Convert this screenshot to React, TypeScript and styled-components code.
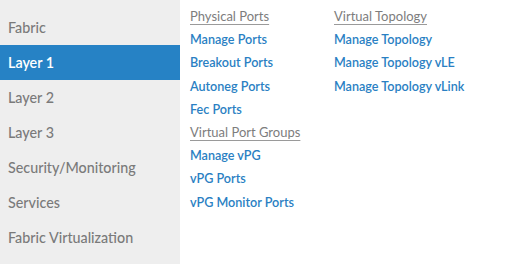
import React from 'react'
import styled, { createGlobalStyle } from 'styled-components'

const GlobalStyle = createGlobalStyle`
  html, body {
    margin: 0;
    padding: 0;
    background: #fff;
  }
  body {
    font-family: Lato, "Open Sans", sans-serif;
  }
`

const Layout = styled.div`
  display: flex;
  width: 509px;
  height: 264px;
  background: #fff;
`

const Sidebar = styled.nav`
  width: 180px;
  flex-shrink: 0;
  background: #eeeeee;
  padding-top: 10px;
  box-sizing: border-box;
`

const NavItem = styled.div<{ $active?: boolean }>`
  height: 35px;
  display: flex;
  align-items: center;
  padding-left: 8px;
  font-size: 14.3px;
  font-weight: ${({ $active }) => ($active ? 600 : 500)};
  color: ${({ $active }) => ($active ? '#fff' : '#7a7a7a')};
  background: ${({ $active }) => ($active ? '#2682c5' : 'transparent')};
`

const Menu = styled.div`
  display: flex;
  padding: 5px 0 0 10px;
`

const Column = styled.div<{ $width: number }>`
  width: ${({ $width }) => $width}px;
  display: flex;
  flex-direction: column;
`

const GroupTitle = styled.div`
  height: 23.2px;
  line-height: 23px;
  font-size: 13px;
  color: #7d7d7d;
  span {
    text-decoration: underline;
    text-decoration-color: #9a9a9a;
    text-underline-offset: 3px;
  }
`

const Link = styled.a`
  height: 23.2px;
  line-height: 23px;
  font-size: 12.6px;
  font-weight: 600;
  color: #2a7fc3;
  text-decoration: none;
  white-space: nowrap;
`

const sidebarItems = [
  'Fabric',
  'Layer 1',
  'Layer 2',
  'Layer 3',
  'Security/Monitoring',
  'Services',
  'Fabric Virtualization'
]

const columns = [
  {
    width: 144,
    groups: [
      {
        title: 'Physical Ports',
        links: ['Manage Ports', 'Breakout Ports', 'Autoneg Ports', 'Fec Ports']
      },
      {
        title: 'Virtual Port Groups',
        links: ['Manage vPG', 'vPG Ports', 'vPG Monitor Ports']
      }
    ]
  },
  {
    width: 170,
    groups: [
      {
        title: 'Virtual Topology',
        links: ['Manage Topology', 'Manage Topology vLE', 'Manage Topology vLink']
      }
    ]
  }
]

export default function App() {
  return (
    <>
      <GlobalStyle />
      <Layout>
        <Sidebar>
          {sidebarItems.map(item => (
            <NavItem key={item} $active={item === 'Layer 1'}>
              {item}
            </NavItem>
          ))}
        </Sidebar>
        <Menu>
          {columns.map((col, i) => (
            <Column key={i} $width={col.width}>
              {col.groups.map(group => (
                <React.Fragment key={group.title}>
                  <GroupTitle>
                    <span>{group.title}</span>
                  </GroupTitle>
                  {group.links.map(link => (
                    <Link key={link}>{link}</Link>
                  ))}
                </React.Fragment>
              ))}
            </Column>
          ))}
        </Menu>
      </Layout>
    </>
  )
}
